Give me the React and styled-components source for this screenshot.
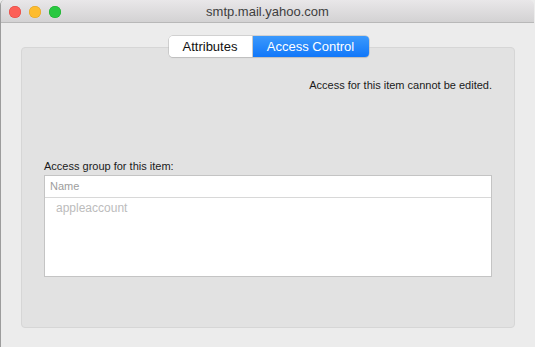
import React from 'react';
import styled, { createGlobalStyle } from 'styled-components';

const GlobalStyle = createGlobalStyle`
  html, body {
    margin: 0;
    padding: 0;
    background: #ececec;
  }
  body {
    font-family: "Liberation Sans", Arial, sans-serif;
    -webkit-font-smoothing: antialiased;
  }
`;

const Window = styled.div`
  width: 534px;
  height: 347px;
  box-sizing: border-box;
  background: #ececec;
  border-left: 1px solid #9c9c9c;
  border-radius: 5px 5px 0 0;
  overflow: hidden;
  display: flex;
  flex-direction: column;
`;

const TitleBar = styled.div`
  height: 22px;
  flex: none;
  display: flex;
  align-items: center;
  position: relative;
  background: linear-gradient(#e9e7e9, #d3d2d3);
  border-bottom: 1px solid #b8b8b8;
`;

const Lights = styled.div`
  display: flex;
  gap: 8px;
  padding-left: 8px;
  padding-top: 1px;
`;

const Light = styled.span`
  width: 12px;
  height: 12px;
  border-radius: 50%;
  background: ${p => p.color};
  box-shadow: inset 0 0 0 0.5px ${p => p.edge};
`;

const Title = styled.div`
  position: absolute;
  left: 0;
  right: 0;
  top: 0;
  line-height: 23px;
  text-align: center;
  font-size: 13px;
  color: #3e3e3e;
  pointer-events: none;
`;

const Body = styled.div`
  flex: 1;
  padding: 13px 19px 19px 20px;
  display: flex;
  flex-direction: column;
  align-items: center;
`;

const Segmented = styled.div`
  display: flex;
  height: 21px;
  box-sizing: border-box;
  border-radius: 4px;
  position: relative;
  z-index: 1;
  margin-bottom: -10px;
  margin-left: 1px;
  box-shadow: 0 0 0 0.5px #b5b5b5, 0 1px 1px rgba(0, 0, 0, 0.12);
  overflow: hidden;
`;

const Segment = styled.div`
  width: ${p => p.w}px;
  display: flex;
  align-items: center;
  justify-content: center;
  font-size: 13px;
  color: ${p => (p.active ? '#ffffff' : '#111111')};
  background: ${p => (p.active ? 'linear-gradient(#3b99fc, #1177f9)' : '#ffffff')};
  border-right: ${p => (p.active ? 'none' : '1px solid #c9c9c9')};
`;

const Panel = styled.div`
  align-self: stretch;
  flex: 1;
  background: #e2e2e2;
  border: 1px solid #d6d6d6;
  border-radius: 4px;
  padding: 29px 22px 0 22px;
  display: flex;
  flex-direction: column;
`;

const Notice = styled.div`
  font-size: 11px;
  color: #1a1a1a;
  text-align: right;
  height: 16px;
  line-height: 16px;
`;

const Label = styled.div`
  margin-top: 66px;
  font-size: 11px;
  color: #1a1a1a;
  line-height: 14px;
  height: 14px;
`;

const Table = styled.div`
  margin-top: 2px;
  height: 102px;
  box-sizing: border-box;
  background: #ffffff;
  border: 1px solid #c4c4c4;
`;

const HeaderRow = styled.div`
  height: 21px;
  border-bottom: 1px solid #d8d8d8;
  padding-left: 5px;
  font-size: 11px;
  line-height: 21px;
  color: #9d9d9d;
`;

const Row = styled.div`
  height: 20px;
  line-height: 20px;
  padding-left: 11px;
  font-size: 12px;
  color: #bcbcbc;
`;

export default function App() {
  return (
    <>
      <GlobalStyle />
      <Window>
        <TitleBar>
          <Lights>
            <Light color="#fc5f57" edge="#e0443e" />
            <Light color="#fdbc2e" edge="#dea123" />
            <Light color="#28c840" edge="#1aab29" />
          </Lights>
          <Title>smtp.mail.yahoo.com</Title>
        </TitleBar>
        <Body>
          <Segmented>
            <Segment w={83}>Attributes</Segment>
            <Segment w={116} active>Access Control</Segment>
          </Segmented>
          <Panel>
            <Notice>Access for this item cannot be edited.</Notice>
            <Label>Access group for this item:</Label>
            <Table>
              <HeaderRow>Name</HeaderRow>
              <Row>appleaccount</Row>
            </Table>
          </Panel>
        </Body>
      </Window>
    </>
  );
}
